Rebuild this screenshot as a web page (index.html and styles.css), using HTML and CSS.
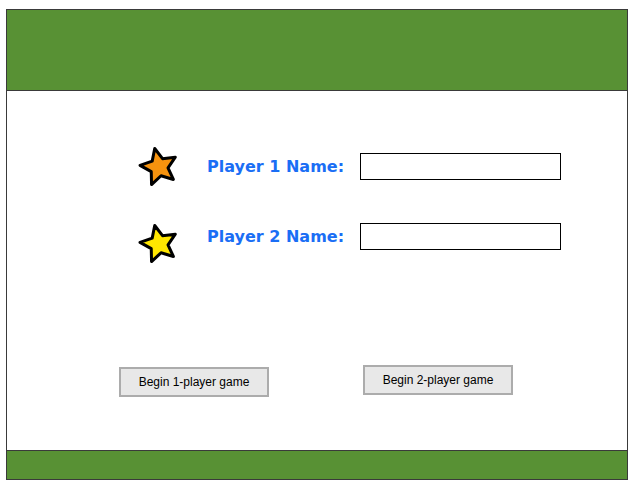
FILE: index.html
```html
<!DOCTYPE html>
<html lang="en">
<head>
    <meta charset="UTF-8">
    <title>Players</title>
    <link rel="stylesheet" href="styles.css">
</head>
<body>
    <div class="page">
        <div class="header"></div>
        <div class="main">
            <div class="players">
                <svg class="star" viewBox="0 0 44 44" width="44" height="44">
                    <polygon class="star-orange" points="22,3 27.3,14.7 40.1,16.1 30.6,24.8 33.2,37.4 22,31 10.8,37.4 13.4,24.8 3.9,16.1 16.7,14.7" transform="rotate(-13 22 22)"/>
                </svg>
                <label class="name-label" for="p1">Player 1 Name:</label>
                <input class="name-input" id="p1" type="text">

                <svg class="star star-low" viewBox="0 0 44 44" width="44" height="44">
                    <polygon class="star-yellow" points="22,3 27.3,14.7 40.1,16.1 30.6,24.8 33.2,37.4 22,31 10.8,37.4 13.4,24.8 3.9,16.1 16.7,14.7" transform="rotate(-13 22 22)"/>
                </svg>
                <label class="name-label" for="p2">Player 2 Name:</label>
                <input class="name-input" id="p2" type="text">
            </div>
            <div class="actions">
                <button class="begin begin-one">Begin 1-player game</button>
                <button class="begin">Begin 2-player game</button>
            </div>
        </div>
        <div class="footer"></div>
    </div>
</body>
</html>
```

FILE: styles.css
```css
:root {
    --green: #589134;
    --frame: #3a3a3a;
    --blue: #1a6ef5;
}
body {
    margin: 0;
    padding: 9px 6px 0 6px;
    background: #fff;
}
.page {
    width: 622px;
    box-sizing: border-box;
    border: 1px solid var(--frame);
}
.header {
    height: 80px;
    background: var(--green);
    border-bottom: 1px solid var(--frame);
}
.main {
    height: 359px;
    box-sizing: border-box;
    padding-top: 62px;
}
.footer {
    height: 28px;
    background: var(--green);
    border-top: 1px solid var(--frame);
}
.players {
    display: grid;
    grid-template-columns: 44px 179px 201px;
    grid-auto-rows: 27px;
    row-gap: 43px;
    padding-left: 130px;
    align-items: center;
}
.star {
    align-self: center;
    display: block;
}
.star-low {
    margin-top: 14px;
}
.star polygon {
    stroke: #000;
    stroke-width: 3;
    stroke-linejoin: round;
}
.star-orange {
    fill: #f7930e;
}
.star-yellow {
    fill: #ffe600;
}
.name-label {
    padding-left: 26px;
    font-family: "DejaVu Sans", Verdana, sans-serif;
    font-weight: bold;
    font-size: 16px;
    color: var(--blue);
    white-space: nowrap;
}
.name-input {
    width: 201px;
    height: 27px;
    box-sizing: border-box;
    border: 1px solid #000;
    margin: 0;
    padding: 0 4px;
    background: #fff;
}
.actions {
    display: flex;
    align-items: flex-start;
    gap: 94px;
    padding-left: 112px;
    margin-top: 115px;
}
.begin {
    width: 150px;
    height: 30px;
    margin: 0;
    background: #e8e8e8;
    border: 2px solid #acacac;
    font-family: "Liberation Sans", Arial, sans-serif;
    font-size: 12px;
    color: #000;
}
.begin-one {
    margin-top: 2px;
}
```
